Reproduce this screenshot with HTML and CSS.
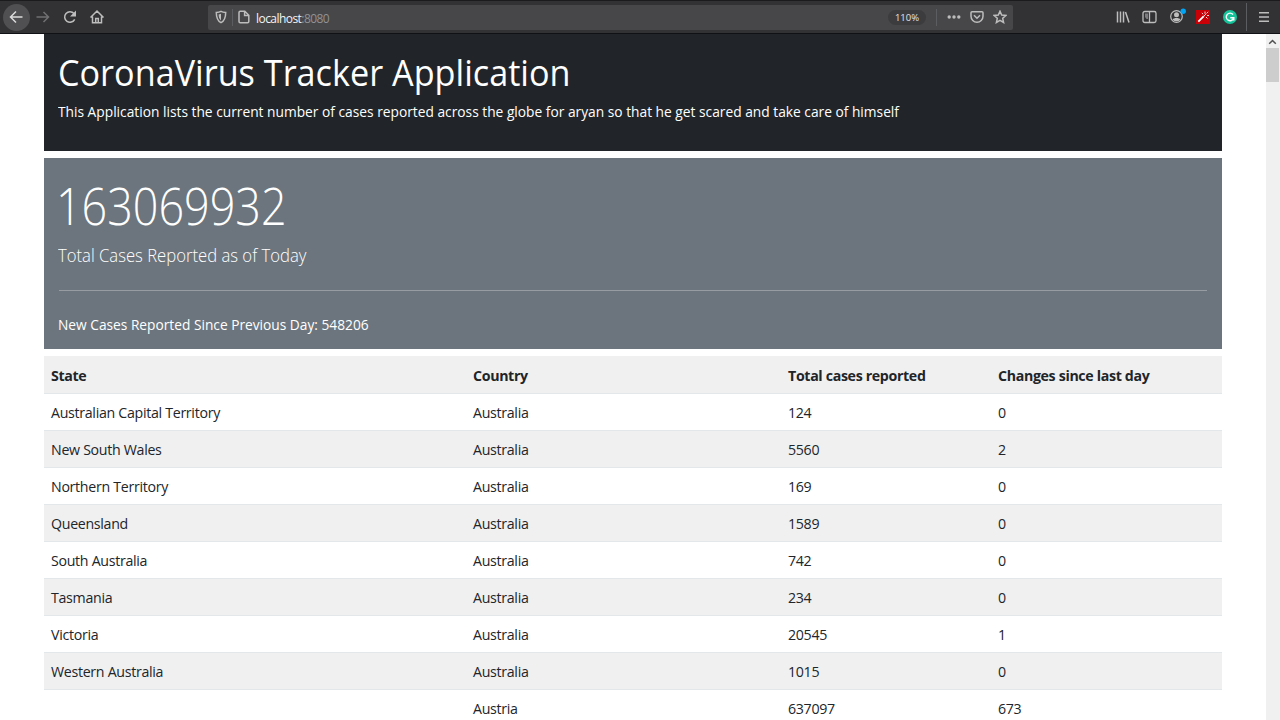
FILE: index.html
```html
<!DOCTYPE html>
<html lang="en">
<head>
<meta charset="utf-8">
<title>CoronaVirus Tracker Application</title>
<link rel="stylesheet" href="styles.css">
</head>
<body>
<header class="toolbar">
  <div class="nav">
    <span class="back"><svg width="16" height="16" viewBox="0 0 16 16"><path d="M14.5 8H2.5M8 2.5 2.5 8 8 13.500"/></svg></span>
    <svg class="dim" width="16" height="16" viewBox="0 0 16 16"><path d="M1.500 8h12M8.500 3l5 5-5 5"/></svg>
    <svg width="16" height="16" viewBox="0 0 16 16"><path d="M12.700 10.300A5.300 5.300 0 1 1 12 4.500"/><path class="solid" d="M14 1.500v6H8z"/></svg>
    <svg width="16" height="16" viewBox="0 0 16 16"><path d="M1.500 8.500 8 2l6.500 6.500M3.500 7.500v6.300h9V7.500M6.700 13.500V9.500h2.600v4"/></svg>
  </div>
  <div class="urlbar">
    <svg class="shield" width="14" height="14" viewBox="0 0 14 14"><path d="M7 1.300c1.500.8 3 1 4.700 1.100 0 5.300-1 8.200-4.700 10.300C3.300 10.600 2.300 7.700 2.300 2.400 4 2.300 5.500 2.100 7 1.300z"/><path class="solid" d="M7 3.700v6.700C5.200 9 4.700 7 4.600 4.400z"/></svg>
    <i class="sep"></i>
    <svg class="page-icon" width="14" height="14" viewBox="0 0 14 14"><path d="M3.200 1.200h4.600l4 4v6.400c0 .8-.4 1.200-1.200 1.200H3.200c-.8 0-1.200-.4-1.200-1.200V2.400c0-.8.4-1.200 1.200-1.200zM7.600 1.500v4h4"/></svg>
    <span class="address">localhost<span class="port">:8080</span></span>
    <span class="zoom">110%</span>
    <i class="sep"></i>
    <svg class="dots" width="14" height="14" viewBox="0 0 14 14"><circle class="solid" cx="2.200" cy="7" r="1.700"/><circle class="solid" cx="7" cy="7" r="1.700"/><circle class="solid" cx="11.800" cy="7" r="1.700"/></svg>
    <svg class="pocket" width="14" height="14" viewBox="0 0 14 14"><path d="M2 1.800h10c.6 0 1 .4 1 1v3.500a6 6 0 0 1-12 0V2.800c0-.6.4-1 1-1zM4 5.300l3 2.900 3-2.900"/></svg>
    <svg width="14" height="14" viewBox="0 0 14 14"><path d="m7 1.200 1.700 3.900 4.200.4-3.200 2.800.9 4.200L7 10.300l-3.600 2.200.9-4.200L1.100 5.500l4.200-.4z"/></svg>
  </div>
  <div class="tools">
    <svg width="14" height="14" viewBox="0 0 14 14"><path d="M1.500 1.500v11M4.500 1.500v11M7.500 1.500v11M9.500 2l3.500 10.500"/></svg>
    <svg width="15" height="14" viewBox="0 0 15 14"><rect x="1" y="1.500" width="13" height="11" rx="1.800"/><path d="M7.500 2v10"/><path class="shade" d="M3 3.500h3v5.500H4.500L3 7z"/></svg>
    <svg class="account" width="18" height="18" viewBox="0 0 18 18"><circle cx="7.500" cy="9.500" r="5.800"/><circle class="solid" cx="7.500" cy="7.700" r="2.500"/><path class="solid" d="M3.600 12.500c.8-2 7-2 7.800 0a5 5 0 0 1-7.800 0z"/><circle class="badge" cx="14.200" cy="4.300" r="2.700"/></svg>
    <svg class="wand" width="14" height="14" viewBox="0 0 14 14"><path class="red" d="M0 0h14v14H0z"/><path class="stick" d="M2.300 11.700 7.800 6.200"/><path class="spark" d="m7.500 6.500 3-3M9 1.500v2.300M5.800 3l1.400 1.200M11 5.500h2M10 7l1.500 1.500M11 3l1.200-1.200"/></svg>
    <svg class="grammar" width="14" height="14" viewBox="0 0 14 14"><circle class="green" cx="7" cy="7" r="7"/><path class="mark" d="M10 4.500A3.800 3.800 0 1 0 10.600 8.300M7.300 7.800h3.500v2.600"/></svg>
    <i class="sep tall"></i>
    <svg width="12" height="14" viewBox="0 0 12 14"><path d="M1 2.800h10M1 7h10M1 11.200h10"/></svg>
  </div>
</header>
<div class="viewport">
  <main class="container">
    <section class="intro">
      <h1>CoronaVirus Tracker Application</h1>
      <p>This Application lists the current number of cases reported across the globe for aryan so that he get scared and take care of himself</p>
    </section>
    <section class="totals">
      <div class="count">163069932</div>
      <p class="lead">Total Cases Reported as of Today</p>
      <hr>
      <p class="new-cases">New Cases Reported Since Previous Day: 548206</p>
    </section>
    <table class="cases">
      <colgroup><col class="c-state"><col class="c-country"><col class="c-total"><col></colgroup>
      <tr><th>State</th><th>Country</th><th>Total cases reported</th><th>Changes since last day</th></tr>
      <tr><td>Australian Capital Territory</td><td>Australia</td><td>124</td><td>0</td></tr>
      <tr><td>New South Wales</td><td>Australia</td><td>5560</td><td>2</td></tr>
      <tr><td>Northern Territory</td><td>Australia</td><td>169</td><td>0</td></tr>
      <tr><td>Queensland</td><td>Australia</td><td>1589</td><td>0</td></tr>
      <tr><td>South Australia</td><td>Australia</td><td>742</td><td>0</td></tr>
      <tr><td>Tasmania</td><td>Australia</td><td>234</td><td>0</td></tr>
      <tr><td>Victoria</td><td>Australia</td><td>20545</td><td>1</td></tr>
      <tr><td>Western Australia</td><td>Australia</td><td>1015</td><td>0</td></tr>
      <tr><td></td><td>Austria</td><td>637097</td><td>673</td></tr>
    </table>
  </main>
  <aside class="scrollbar">
    <svg width="13" height="13" viewBox="0 0 13 13"><path d="M3.200 8.800 6.500 5.500l3.300 3.300"/></svg>
    <div class="thumb"></div>
  </aside>
</div>
</body>
</html>
```
FILE: styles.css
```css
* { box-sizing: border-box; }
body {
  margin: 0;
  height: 720px;
  overflow: hidden;
  display: flex;
  flex-direction: column;
  background: #fff;
  color: #212529;
  font-family: "Open Sans", "Noto Sans", sans-serif;
  font-size: 14.4px;
}
h1, p { margin: 0; font-weight: 400; white-space: nowrap; }
svg { flex: none; fill: none; stroke: #bdbdbe; stroke-width: 1.5; }
.solid { fill: #bdbdbe; stroke: none; }

.toolbar {
  flex: none;
  display: flex;
  align-items: center;
  height: 34px;
  background: #323234;
  border-top: 1px solid #1b1b1d;
  border-bottom: 1px solid #101114;
}
.nav { display: flex; align-items: center; gap: 10.800px; width: 208px; padding-left: 2.500px; }
.back {
  display: flex;
  align-items: center;
  justify-content: center;
  width: 27px;
  height: 27px;
  margin-right: -5px;
  border-radius: 50%;
  background: #505052;
}
.back svg { stroke: #dadadb; }
.dim { stroke: #707072; }

.urlbar {
  display: flex;
  align-items: center;
  width: 805px;
  height: 25px;
  padding: 0 5px 0 6px;
  border-radius: 2px;
  background: #474749;
}
.sep { width: 1px; height: 17px; background: #5c5d60; }
.shield { margin-right: 4px; }
.page-icon { margin-left: 4px; }
.address { margin-left: 5px; padding-top: 2px; color: #f3f3f4; font-size: 12px; letter-spacing: -.55px; }
.port { color: #929294; }
.zoom {
  width: 38px;
  height: 15px;
  margin: 1px 10px 0 auto;
  border-radius: 8px;
  background: #3c3c3e;
  color: #e4e4e5;
  font-size: 9.500px;
  line-height: 15px;
  text-align: center;
}
.dots { margin: 0 9px 0 10px; }
.pocket { margin-right: 9px; }
.urlbar svg:last-child { margin-right: 1px; }

.tools { display: flex; align-items: center; margin-left: 103px; }
.tools svg:nth-child(2) { margin-left: 12px; stroke-width: 1.3; }
.shade { fill: #7c7c7e; stroke: none; }
.account { margin: -2px 1px 0 12px; stroke-width: 1.2; }
.badge { fill: #00a5f5; stroke: none; }
.wand { margin-left: 8px; }
.red { fill: #c90006; stroke: none; }
.stick { stroke: #fff; stroke-width: 1.8; }
.spark { stroke: #ffd0d0; stroke-width: 1; }
.grammar { margin: 0 9px 0 13px; }
.green { fill: #15c39a; stroke: none; }
.mark { stroke: #fff; stroke-width: 1.400; }
.tall { height: 28px; margin-right: 11px; }

.viewport { flex: 1; min-height: 0; display: flex; justify-content: space-between; }
.container { width: 1178.500px; margin-left: 43.500px; }
.intro { height: 117px; padding: 13px 15px; background: #212529; color: #fff; }
.intro h1, .intro p, .count, .lead, .new-cases { margin-left: -.7px; transform-origin: 0 50%; }
.intro h1 { font-size: 36.500px; line-height: 50px; transform: scaleX(.937); }
.intro p { margin-top: 1px; line-height: 28px; transform: scaleX(.956); }
.totals { height: 191.500px; margin: 6.500px 0 7px; padding: 15px 15px; background: #6c757d; color: #fff; }
.count { margin: 0 0 2px -2.500px; font-size: 51px; font-weight: 300; line-height: 64px; transform: scaleX(.88); }
.lead { font-size: 18px; font-weight: 300; line-height: 32px; transform: scaleX(.926); }
hr { height: 1px; margin: 19px 0 20px; border: 0; background: #969ca2; }
.new-cases { line-height: 28px; transform: scaleX(.954); }

.cases { width: 100%; border-collapse: collapse; table-layout: fixed; }
.c-state { width: 422px; }
.c-country { width: 315px; }
.c-total { width: 210px; }
.cases tr { height: 37px; }
.cases tr:nth-child(odd) { background: #f0f0f1; }
.cases th, .cases td {
  padding: 2px 7.500px 0;
  border-top: 1px solid #e4e7ea;
  text-align: left;
  font-size: 14.200px;
  line-height: 22px;
  letter-spacing: -.3px;
  white-space: nowrap;
}
.cases th { border-top-color: #f0f0f1; letter-spacing: -.34px; font-weight: 700; }

.scrollbar { display: flex; flex-direction: column; width: 14px; padding: 1px 1px 0 0; background: #f0f0f0; }
.scrollbar svg { stroke: #505050; }
.thumb { height: 34px; background: #cdcdcd; }
```
